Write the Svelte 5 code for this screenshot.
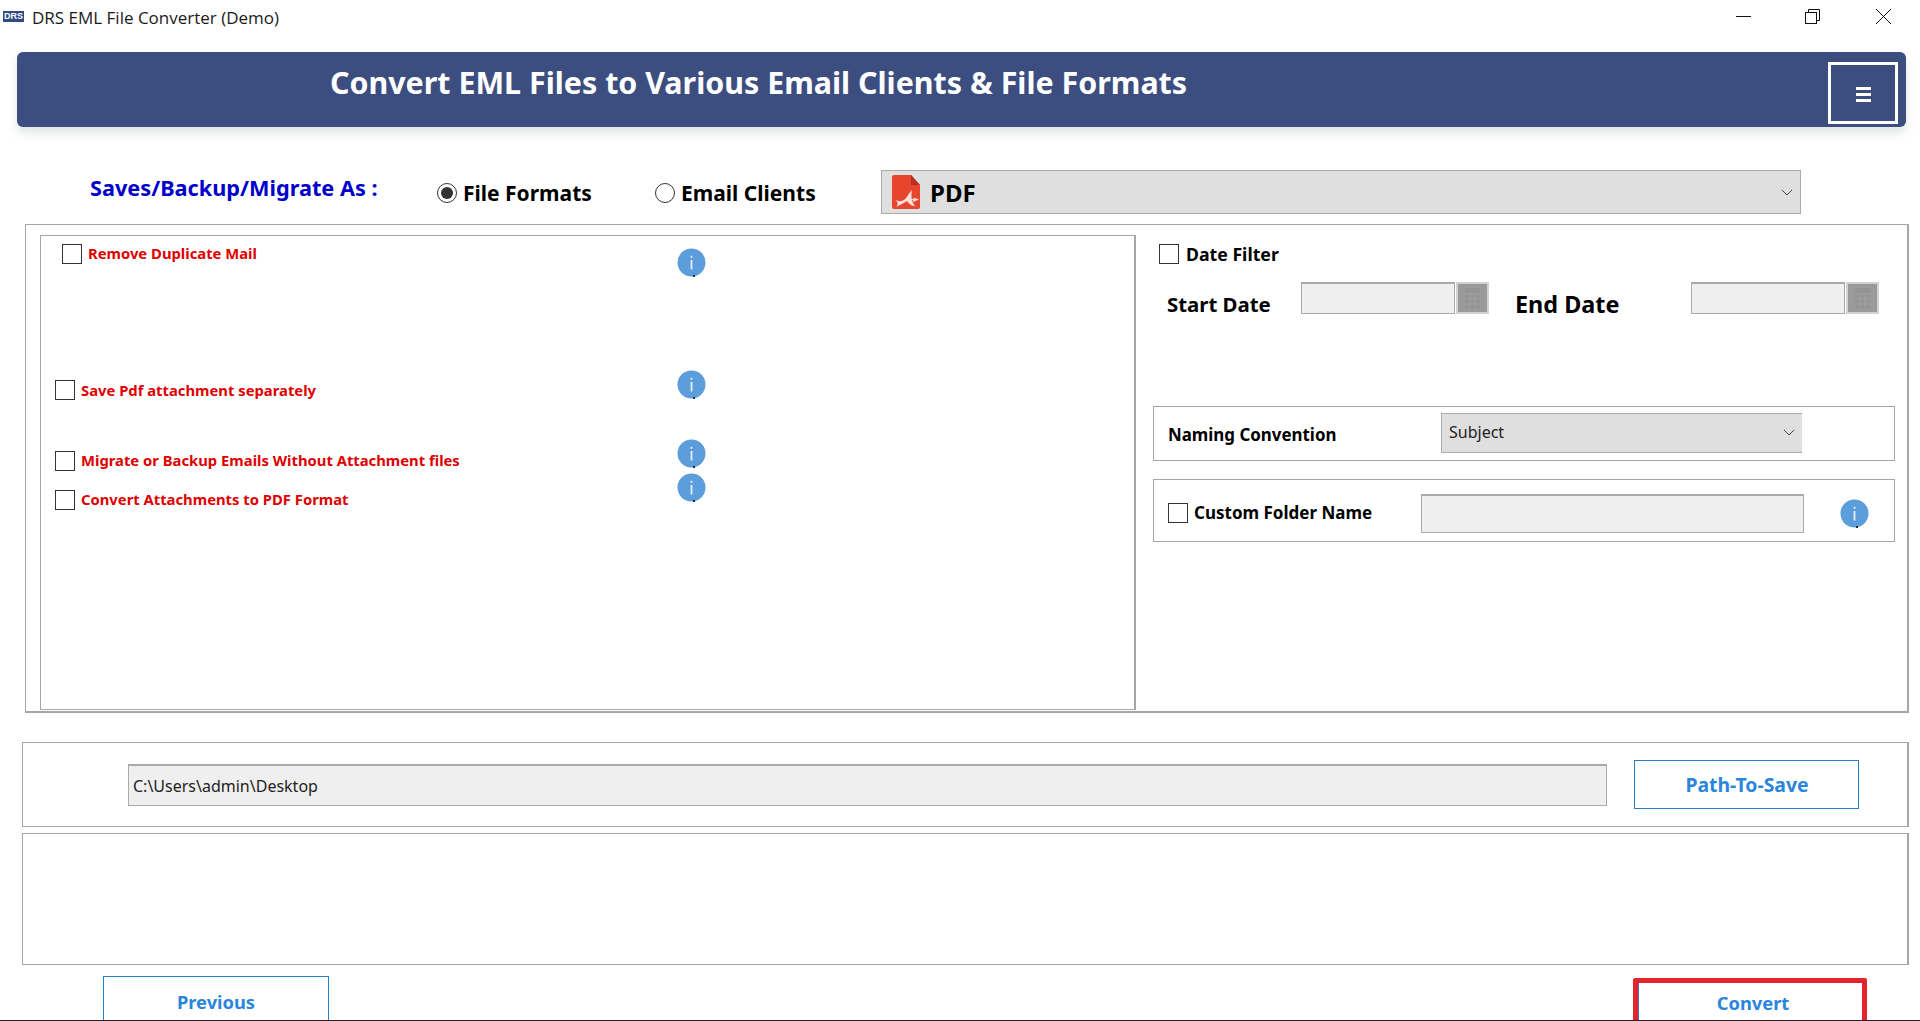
<script>
  const options = [
    { label: 'Remove Duplicate Mail', cls: 'first' },
    { label: 'Save Pdf attachment separately', cls: 'second' },
    { label: 'Migrate or Backup Emails Without Attachment files', cls: 'third' },
    { label: 'Convert Attachments to PDF Format', cls: 'fourth' }
  ];
  const dates = [
    { label: 'Start Date', cls: 'start' },
    { label: 'End Date', cls: 'end' }
  ];
</script>

{#snippet info()}
  <svg class="info" viewBox="0 0 29 29" aria-hidden="true">
    <circle cx="14.5" cy="14.5" r="14" fill="#5c9ddc" />
    <rect x="13.6" y="12" width="1.8" height="9.5" fill="#e4effa" />
    <rect x="13.6" y="7.8" width="1.8" height="2" fill="#e4effa" />
    <rect x="16" y="27" width="2" height="2" fill="#1c2a3a" />
  </svg>
{/snippet}

{#snippet chevron()}
  <svg class="chevron" viewBox="0 0 12 7" aria-hidden="true">
    <polyline points="1,1 6,6 11,1" fill="none" stroke="#444" stroke-width="1" />
  </svg>
{/snippet}

{#snippet cal()}
  <svg class="cal" viewBox="0 0 33 32" aria-hidden="true">
    <rect width="33" height="32" fill="#d2d2d2" />
    <rect x="2" y="2" width="29" height="28" fill="#9a9a9a" />
    <rect x="9" y="6" width="15" height="20" fill="#949494" />
    <path d="M9 12 H24 M9 17 H24 M9 22 H24 M14 12 V26 M19 12 V26" stroke="#a2a2a2" stroke-width="1" fill="none" />
  </svg>
{/snippet}

<div class="page">
  <header class="titlebar">
    <span class="appicon">DRS</span>
    <span class="apptitle">DRS EML File Converter (Demo)</span>
    <div class="winctl">
      <svg viewBox="0 0 15 15" aria-hidden="true"><line x1="0" y1="7.5" x2="15" y2="7.5" stroke="#111" /></svg>
      <svg viewBox="0 0 15 15" aria-hidden="true">
        <rect x="0.5" y="3.5" width="11" height="11" fill="none" stroke="#111" />
        <polyline points="3.5,3.5 3.5,0.5 14.5,0.5 14.5,11.5 11.5,11.5" fill="none" stroke="#111" />
      </svg>
      <svg viewBox="0 0 15 15" aria-hidden="true"><path d="M0 0 L15 15 M15 0 L0 15" stroke="#111" fill="none" /></svg>
    </div>
  </header>

  <div class="banner">
    <h1>Convert EML Files to Various Email Clients &amp; File Formats</h1>
    <button class="menu" aria-label="Menu"><i></i><i></i><i></i></button>
  </div>

  <section class="format-row">
    <div class="saves">Saves/Backup/Migrate As :</div>
    <label class="radio r1"><span class="dot on"></span>File Formats</label>
    <label class="radio r2"><span class="dot"></span>Email Clients</label>
    <div class="format-select">
      <svg class="pdf" viewBox="0 0 28 34" aria-hidden="true">
        <path d="M2 0 H19 L28 10 V32 a2 2 0 0 1 -2 2 H2 a2 2 0 0 1 -2 -2 V2 a2 2 0 0 1 2 -2 Z" fill="#e8452f" />
        <path d="M19 0 L28 10 H19 Z" fill="#b9301f" />
        <path d="M2 24 C6 27 11 27 14 23 C16 20 18 17 20 15 C19 20 19 26 23 31 C20 31 17 29 15 26 C12 28 8 30 4 32 C7 29 6 27 2 24 Z M20 24 C22 23 25 23 27 25 C24 25 23 26 22 27 Z" fill="#fbe3dc" />
      </svg>
      <span class="pdf-label">PDF</span>
      {@render chevron()}
    </div>
  </section>

  <section class="main">
    <div class="options">
      {#each options as o}
        <div class="opt {o.cls}">
          <span class="check"></span>
          <span class="opt-label">{o.label}</span>
          {@render info()}
        </div>
      {/each}
    </div>

    <div class="side">
      <div class="datefilter"><span class="check"></span><span class="df-label">Date Filter</span></div>
      <div class="dates">
        {#each dates as d}
          <div class="date {d.cls}">
            <span class="date-label">{d.label}</span>
            <span class="field"></span>
            {@render cal()}
          </div>
        {/each}
      </div>
      <div class="naming">
        <span class="naming-label">Naming Convention</span>
        <div class="naming-select"><span>Subject</span>{@render chevron()}</div>
      </div>
      <div class="custom">
        <span class="check"></span>
        <span class="custom-label">Custom Folder Name</span>
        <span class="field custom-field"></span>
        {@render info()}
      </div>
    </div>
  </section>

  <section class="pathbox">
    <div class="path">C:\Users\admin\Desktop</div>
    <button class="btn path-btn">Path-To-Save</button>
  </section>

  <section class="log"></section>

  <footer class="foot">
    <button class="btn prev">Previous</button>
    <button class="btn convert">Convert</button>
  </footer>
</div>

<style>
  :global(body) { margin: 0; background: #fff; }

  .page {
    width: 1920px;
    height: 1021px;
    overflow: hidden;
    background: #fff;
    border-bottom: 1px solid #222;
    box-sizing: border-box;
    font-family: "Noto Sans", "Open Sans", sans-serif;
    color: #000;
  }

  .titlebar {
    height: 52px;
    display: flex;
    align-items: flex-start;
    padding: 0 29px 0 3px;
    box-sizing: border-box;
  }
  .appicon {
    width: 21px;
    height: 11px;
    margin-top: 11px;
    background: #2f4a84;
    color: #fff;
    font: bold 9px/11px "Liberation Sans", sans-serif;
    text-align: center;
  }
  .apptitle {
    margin: 6px 0 0 8px;
    font-family: "Open Sans", sans-serif;
    font-size: 17px;
    line-height: 24px;
    color: #1a1a1a;
  }
  .winctl { margin: 9px 0 0 auto; display: flex; gap: 54px; }
  .winctl svg { width: 15px; height: 15px; display: block; }
  .winctl svg:last-child { margin-left: 2px; }

  .banner {
    margin: 0 14px 0 17px;
    height: 75px;
    box-sizing: border-box;
    background: #3c4d80;
    border-radius: 6px;
    box-shadow: 0 6px 10px rgba(120, 140, 140, 0.22);
    display: flex;
    align-items: flex-start;
    padding: 10px 8px 0 313px;
  }
  h1 {
    margin: 0;
    color: #fff;
    font-size: 30.4px;
    line-height: 41px;
    font-weight: 700;
    white-space: nowrap;
  }
  .menu {
    margin-left: auto;
    width: 70px;
    height: 62px;
    background: transparent;
    border: 3px solid #fff;
    box-sizing: border-box;
    display: flex;
    flex-direction: column;
    gap: 3px;
    align-items: center;
    justify-content: flex-start;
    padding: 22px 0 0;
  }
  .menu i { display: block; width: 15px; height: 3px; background: #fff; }

  .format-row {
    height: 97px;
    display: flex;
    align-items: flex-start;
    padding-top: 43px;
    box-sizing: border-box;
  }
  .saves {
    margin: 3px 0 0 90px;
    width: 347px;
    color: #0000cc;
    font-weight: 700;
    font-size: 21.7px;
    line-height: 30px;
    white-space: nowrap;
  }
  .radio {
    display: flex;
    align-items: center;
    gap: 6px;
    font-weight: 700;
    font-size: 21px;
    line-height: 30px;
    margin-top: 8px;
    white-space: nowrap;
  }
  .r1 { width: 218px; }
  .r2 { width: 226px; }
  .dot {
    width: 20px;
    height: 20px;
    box-sizing: border-box;
    border: 1px solid #333;
    border-radius: 50%;
    display: grid;
    place-items: center;
  }
  .dot.on::after { content: ""; width: 12px; height: 12px; border-radius: 50%; background: #333; }

  .format-select {
    width: 920px;
    height: 44px;
    box-sizing: border-box;
    background: #dfdfdf;
    border: 1px solid #aaa;
    display: flex;
    align-items: center;
    padding: 0 7px 0 10px;
  }
  .pdf { width: 28px; height: 34px; flex: none; }
  .pdf-label { margin-left: 10px; font-weight: 700; font-size: 24px; }
  .chevron { width: 12px; height: 7px; margin-left: auto; flex: none; }

  .main {
    margin-left: 25px;
    width: 1884px;
    height: 489px;
    box-sizing: border-box;
    border: 1px solid #a6a6a6;
    border-width: 1px 2px 2px 1px;
    padding: 10px 0 0 14px;
    display: flex;
    align-items: flex-start;
  }
  .options {
    width: 1096px;
    height: 475px;
    box-sizing: border-box;
    border: 2px solid #a6a6a6;
    border-width: 1px 2px 1px 1px;
    padding-top: 8px;
    flex: none;
  }
  .opt {
    display: flex;
    align-items: flex-start;
    padding-left: 14px;
    box-sizing: border-box;
    color: #e00000;
    font-weight: 700;
    font-size: 14.8px;
    line-height: 20px;
  }
  .check {
    width: 20px;
    height: 20px;
    box-sizing: border-box;
    border: 1px solid #333;
    flex: none;
  }
  .opt-label { margin-left: 6px; width: 596px; flex: none; white-space: nowrap; }
  .info { width: 29px; height: 29px; flex: none; display: block; }
  .first { height: 126px; padding-left: 21px; }
  .first .opt-label { width: 589px; margin-top: -1px; margin-bottom: 1px; }
  .first .info { margin-top: 4px; }
  .second { height: 69px; }
  .second .check, .second .opt-label { margin-top: 10px; }
  .third { height: 34px; }
  .third .check { margin-top: 12px; }
  .third .opt-label { margin-top: 11px; }
  .fourth .check { margin-top: 17px; }
  .fourth .opt-label { margin-top: 16px; }

  .side { margin-left: 17px; width: 742px; flex: none; }
  .datefilter {
    display: flex;
    align-items: center;
    padding: 9px 0 0 6px;
    height: 20px;
  }
  .df-label { margin-left: 7px; font-weight: 700; font-size: 17.7px; white-space: nowrap; }
  .dates { display: flex; margin-top: 18px; height: 32px; }
  .date { display: flex; align-items: flex-start; white-space: nowrap; font-weight: 700; }
  .date-label { line-height: 32px; }
  .start { width: 362px; padding-left: 14px; box-sizing: border-box; font-size: 20.4px; }
  .start .date-label { width: 134px; margin-top: 6px; }
  .end { font-size: 23.4px; }
  .end .date-label { width: 176px; margin-top: 6px; }
  .field {
    display: block;
    box-sizing: border-box;
    background: #efefef;
    border: 1px solid #aaa;
    border-top-width: 2px;
    width: 154px;
    height: 32px;
    flex: none;
  }
  .cal {
    display: block;
    width: 33px;
    height: 32px;
    flex: none;
    margin-left: 1px;
  }
  .naming {
    margin-top: 92px;
    height: 55px;
    box-sizing: border-box;
    border: 1px solid #a6a6a6;
    display: flex;
    align-items: flex-start;
    padding: 6px 0 0 14px;
  }
  .naming-label {
    width: 273px;
    font-weight: 700;
    font-size: 16.9px;
    line-height: 22px;
    margin-top: 11px;
    white-space: nowrap;
  }
  .naming-select {
    width: 361px;
    height: 40px;
    box-sizing: border-box;
    background: #dfdfdf;
    border: 1px solid #aaa;
    border-right: 0;
    display: flex;
    align-items: center;
    padding: 0 7px 2px 7px;
    font-size: 16px;
    color: #222;
  }
  .custom {
    margin-top: 18px;
    height: 63px;
    box-sizing: border-box;
    border: 1px solid #a6a6a6;
    display: flex;
    align-items: flex-start;
    padding: 14px 0 0 14px;
  }
  .custom .check { margin-top: 9px; }
  .custom-label {
    width: 227px;
    margin: 9px 0 0 6px;
    font-weight: 700;
    font-size: 17px;
    line-height: 20px;
    white-space: nowrap;
  }
  .custom-field { width: 383px; height: 39px; }
  .custom .info { margin: 5px 0 0 36px; }

  .pathbox {
    margin: 29px 0 0 22px;
    width: 1887px;
    height: 85px;
    box-sizing: border-box;
    border: 1px solid #a6a6a6;
    border-width: 1px 2px 1px 1px;
    display: flex;
    align-items: flex-start;
    padding: 17px 0 0 105px;
  }
  .path {
    width: 1479px;
    height: 42px;
    margin-top: 4px;
    box-sizing: border-box;
    background: #efefef;
    border: 1px solid #aaa;
    border-top-width: 2px;
    padding-left: 4px;
    font-size: 16px;
    line-height: 40px;
    color: #222;
    white-space: nowrap;
  }
  .btn {
    background: #fff;
    border: 1px solid #2b7fc0;
    color: #2a86dc;
    font: 700 19.4px "Noto Sans", sans-serif;
    padding: 0;
    box-sizing: border-box;
  }
  .path-btn { margin-left: 27px; width: 225px; height: 49px; padding-left: 1px; }

  .log {
    margin: 6px 0 0 22px;
    width: 1887px;
    height: 132px;
    box-sizing: border-box;
    border: 1px solid #a6a6a6;
    border-width: 1px 2px 1px 1px;
  }

  .foot {
    height: 44px;
    margin-top: 11px;
    display: flex;
    align-items: flex-start;
    padding-left: 103px;
  }
  .prev { width: 226px; height: 60px; padding-bottom: 10px; font-size: 18.3px; }
  .convert {
    margin: 2px 0 0 1304px;
    width: 234px;
    height: 60px;
    border: 5px solid #e3242b;
    border-radius: 2px;
    padding: 0 0 11px 6px;
    font-size: 18.3px;
    box-shadow: inset 1px 0 0 #3f6fb5;
  }
</style>
